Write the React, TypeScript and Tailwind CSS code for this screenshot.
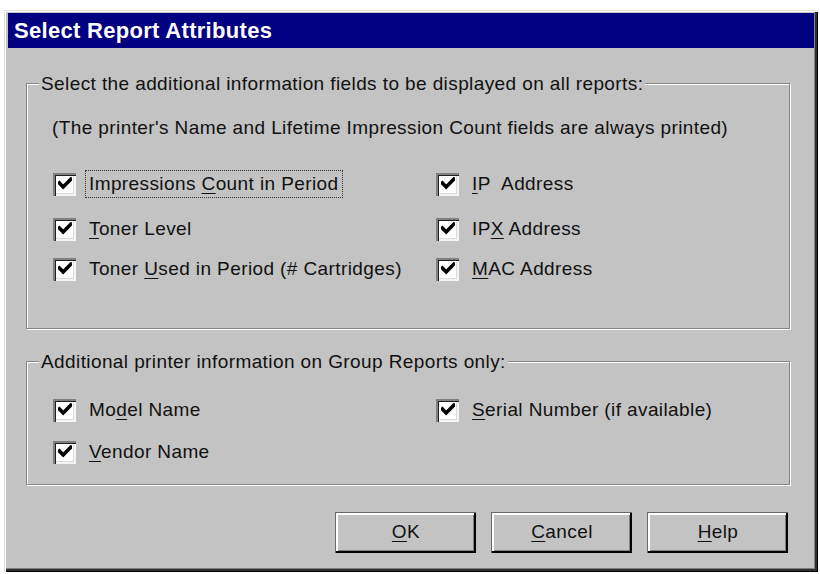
import React from "react";

const font = { fontFamily: '"Liberation Sans", Arial, sans-serif' };

function Check() {
  return (
    <div className="w-[23px] h-[23px] shrink-0 bg-white shadow-[inset_2px_2px_0_#808080,inset_3px_3px_0_#202020,inset_-2px_-2px_0_#f4f4f4,inset_-3px_-3px_0_#dcdcdc] flex items-center justify-center">
      <svg width="14" height="14" viewBox="0 0 7 7" className="block">
        <path d="M0.7 3.0 L2.6 5.0 L6.4 1.1" fill="none" stroke="#000" strokeWidth="1.8" strokeLinecap="square" />
      </svg>
    </div>
  );
}

function Item({ pre, u, post, focus }: { pre?: string; u: string; post?: string; focus?: boolean }) {
  return (
    <div className="flex items-center h-[30px]">
      <Check />
      <span
        className={
          "ml-[9px] px-[3px] leading-[26px] border " +
          (focus ? "border-dotted border-[#333]" : "border-transparent")
        }
      >
        {pre}
        <span className="underline underline-offset-[3px] decoration-1">{u}</span>
        {post}
      </span>
    </div>
  );
}

function Group({ label, className, children }: { label: string; className: string; children: React.ReactNode }) {
  return (
    <div className={"relative border border-[#858585] shadow-[1px_1px_0_#fff,inset_1px_1px_0_#fff] " + className}>
      <span className="absolute left-[12px] top-0 -translate-y-1/2 px-[2px] bg-[#c3c3c3] leading-[22px]">{label}</span>
      {children}
    </div>
  );
}

function Btn({ pre, u, post }: { pre?: string; u: string; post?: string }) {
  return (
    <div className="w-[141px] h-[41px] bg-[#c3c3c3] border-t border-l border-[#6a6a6a] shadow-[inset_-2px_-2px_0_#000,inset_2px_2px_0_#fff,inset_-3px_-3px_0_#808080] flex items-center justify-center pb-[2px]">
      <span>
        {pre}
        <span className="underline underline-offset-[3px] decoration-1">{u}</span>
        {post}
      </span>
    </div>
  );
}

export default function App() {
  return (
    <div className="w-[820px] h-[574px] bg-white pt-[10px] pl-[4px] text-[19px] tracking-[0.4px] text-[#111]" style={font}>
      <div className="w-[814px] h-[562px] bg-[#c3c3c3] shadow-[inset_1px_1px_0_#e0e0e0,inset_2px_2px_0_#fff,inset_-1px_-1px_0_#000,inset_-3px_-3px_0_#303030,inset_-4px_-4px_0_#808080] pt-[3px] px-[4px] flex flex-col">
        <div className="h-[35px] bg-[#000080] text-white font-bold text-[22px] tracking-[0.3px] flex items-center pl-[6px] pb-[1px]">
          Select Report Attributes
        </div>

        <Group label="Select the additional information fields to be displayed on all reports:" className="mt-[35px] ml-[18px] w-[764px] h-[246px] pt-[33px] pl-[26px]">
          <div className="leading-[22px] -ml-[1px]">
            (The printer's Name and Lifetime Impression Count fields are always printed)
          </div>
          <div className="grid grid-cols-[383px_1fr]">
            <div className="flex flex-col">
              <div className="mt-[30px]">
                <Item pre="Impressions " u="C" post="ount in Period" focus />
              </div>
              <div className="mt-[15px]">
                <Item u="T" post="oner Level" />
              </div>
              <div className="mt-[10px]">
                <Item pre="Toner " u="U" post="sed in Period (# Cartridges)" />
              </div>
            </div>
            <div className="flex flex-col">
              <div className="mt-[30px]">
                <Item u="I" post={"P\u00a0 Address"} />
              </div>
              <div className="mt-[15px]">
                <Item pre="IP" u="X" post=" Address" />
              </div>
              <div className="mt-[10px]">
                <Item u="M" post="AC Address" />
              </div>
            </div>
          </div>
        </Group>

        <Group label="Additional printer information on Group Reports only:" className="mt-[32px] ml-[18px] w-[764px] h-[124px] pt-[33px] pl-[26px]">
          <div className="grid grid-cols-[383px_1fr]">
            <div className="flex flex-col">
              <Item pre="Mo" u="d" post="el Name" />
              <div className="mt-[12px]">
                <Item u="V" post="endor Name" />
              </div>
            </div>
            <div className="flex flex-col">
              <Item u="S" post="erial Number (if available)" />
            </div>
          </div>
        </Group>

        <div className="mt-[27px] ml-[327px] flex gap-[15px]">
          <Btn u="O" post="K" />
          <Btn u="C" post="ancel" />
          <Btn u="H" post="elp" />
        </div>
      </div>
    </div>
  );
}
